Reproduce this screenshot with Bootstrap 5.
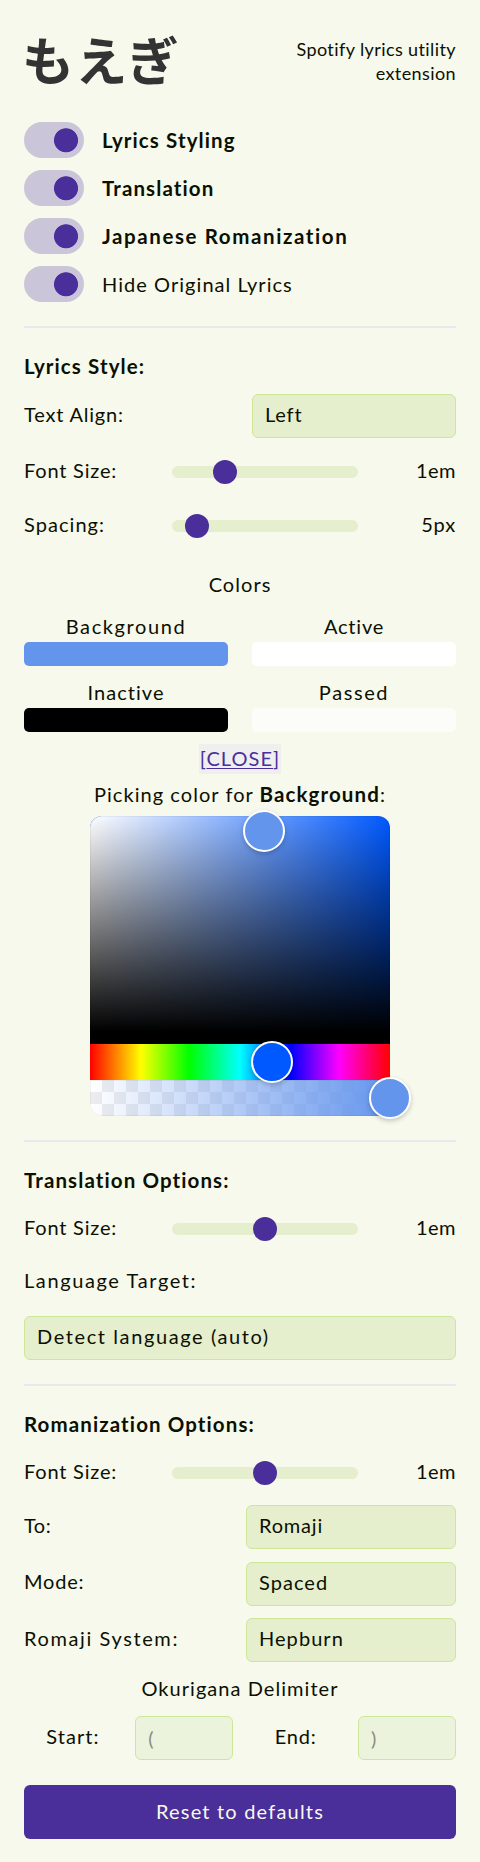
<!DOCTYPE html>
<html lang="en">
<head>
<meta charset="utf-8">
<meta name="viewport" content="width=device-width, initial-scale=1">
<title>もえぎ</title>
<link href="https://cdn.jsdelivr.net/npm/bootstrap@5.3.0/dist/css/bootstrap.min.css" rel="stylesheet">
<style>
  :root { --ink: #0b1002; --accent: #4a2e9a; --field: #e5eecd; --field-line: #cfe699; }
  body { background: #f7f9ec; color: var(--ink); font: 20px/28px Lato, "Noto Sans CJK JP", sans-serif; letter-spacing: .8px; }
  .popup { width: 480px; height: 1862px; padding: 24px 24px 0; }
  b, .fw-bold { font-size: 20.5px; letter-spacing: 1.1px; }
  .top { height: 76px; margin-bottom: 22px; }
  .brand { font: 700 52px/76px "Noto Sans CJK JP", sans-serif; color: #333; letter-spacing: 1.2px; margin: -6px 0 0 -2px; }
  .tagline { font-size: 18px; line-height: 24.5px; width: 180px; letter-spacing: .4px; margin-top: -2px; }
  .toggles { gap: 12px; }
  .toggle { gap: 18px; height: 36px; min-height: 0; padding: 0; margin: 0; }
  .form-switch .form-check-input { width: 60px; height: 36px; margin: 0; border: 0; border-radius: 18px; float: none; flex: none;
    background: radial-gradient(circle at 42px 18.3px, var(--accent) 11.6px, #cbc5da 12.4px) !important; }
  hr { margin: 24px 0; border: 0; height: 2px; background: #e9e9ed; opacity: 1; }
  .section-name { height: 28px; line-height: 28px; }
  .line-r { display: flex; align-items: center; justify-content: space-between; }
  .line-r > span, .delims > span { padding-bottom: 5px; }
  .form-select, .form-control { height: 44px; padding: 0 12px; font: inherit; letter-spacing: inherit; line-height: 42px; color: var(--ink);
    background: var(--field); border: 1px solid var(--field-line); border-radius: 6px; }
  .form-select { padding-bottom: 4px; line-height: 39px; }
  .w-align { width: 204px; } .w-roman { width: 210px; } .w-delim { width: 98px; }
  .form-control { background: #ecf3dd; }
  .form-control::placeholder { color: #898d80; }
  .slider-row { display: grid; grid-template-columns: 148px 186px 1fr; grid-template-rows: 28px; align-items: center; height: 28px; }
  .form-range { height: 24px; display: block; margin-top: 4px; }
  .form-range::-webkit-slider-runnable-track { height: 12px; background: var(--field); border-radius: 6px; }
  .form-range::-webkit-slider-thumb { width: 24px; height: 24px; margin-top: -6px; background: var(--accent); box-shadow: none; }
  .swatches { display: grid; grid-template-columns: 204px 204px; gap: 14px 24px; text-align: center; }
  .swatch { height: 24px; border-radius: 5px; }
  .swatch-name { line-height: 25px; height: 28px; }
  .close-link { display: block; width: 82px; height: 30px; line-height: 28px; background: #efefef; color: var(--accent); text-decoration: none; }
  .close-link span { text-decoration: underline; text-underline-offset: 2px; text-decoration-thickness: 1px; }
  .picker { width: 300px; height: 300px; }
  .picker > div { position: relative; }
  .shade { height: 228px; border-radius: 12px 12px 0 0; border-bottom: 12px solid #000;
    background: linear-gradient(to top, #000, transparent), linear-gradient(to right, #fff, rgba(255,255,255,0)) #0059ff; box-shadow: inset 0 0 0 1px rgba(0,0,0,.05); }
  .hue { height: 36px; background: linear-gradient(to right, red 0, #ff0 17%, #0f0 33%, #0ff 50%, #00f 67%, #f0f 83%, red 100%); }
  .alpha { height: 36px; border-radius: 0 0 12px 12px; box-shadow: inset 0 0 0 1px rgba(0,0,0,.05);
    background: linear-gradient(to right, rgba(100,149,237,0), #6495ed), conic-gradient(#ededee 25%, #fff 0 50%, #ededee 0 75%, #fff 0) 0 0 / 24px 24px; }
  .knob { position: absolute; width: 42px; height: 42px; margin: -21px 0 0 -21px; border: 2px solid #fff; border-radius: 50%; background: #6495ed; box-shadow: 0 2px 5px rgba(0,0,0,.2); z-index: 2; }
  .reset { height: 54px; background: var(--accent) !important; color: #f7f9ec !important; border: 0; border-radius: 6px; font: inherit; letter-spacing: 1.2px; padding: 0 0 3px; line-height: 50px; }
  .ls-0 { letter-spacing: .5px; } .ls-1 { letter-spacing: 1.05px; } .ls-2 { letter-spacing: 1.6px; }
</style>
</head>
<body>
<main class="popup">
  <header class="top d-flex align-items-center justify-content-between">
    <h1 class="brand" lang="ja">もえぎ</h1>
    <div class="tagline text-end">Spotify lyrics utility extension</div>
  </header>

  <div class="toggles d-flex flex-column">
    <label class="toggle form-check form-switch d-flex align-items-center"><input class="form-check-input" type="checkbox" role="switch" checked><span class="fw-bold">Lyrics Styling</span></label>
    <label class="toggle form-check form-switch d-flex align-items-center"><input class="form-check-input" type="checkbox" role="switch" checked><span class="fw-bold">Translation</span></label>
    <label class="toggle form-check form-switch d-flex align-items-center"><input class="form-check-input" type="checkbox" role="switch" checked><span class="fw-bold ls-2">Japanese Romanization</span></label>
    <label class="toggle form-check form-switch d-flex align-items-center"><input class="form-check-input" type="checkbox" role="switch" checked><span class="ls-1">Hide Original Lyrics</span></label>
  </div>

  <hr>

  <section>
    <div class="section-name fw-bold" style="margin-bottom:14px">Lyrics Style:</div>
    <div class="line-r"><span>Text Align:</span><select class="form-select w-align"><option>Left</option></select></div>
    <div class="slider-row" style="margin-top:18px"><span>Font Size:</span><input type="range" class="form-range" min="0" max="100" value="25"><span class="text-end ls-0">1em</span></div>
    <div class="slider-row" style="margin-top:26px"><span class="ls-1">Spacing:</span><input type="range" class="form-range" min="0" max="100" value="8"><span class="text-end">5px</span></div>
    <div class="text-center ls-1" style="margin:32px 0 16px">Colors</div>
    <div class="swatches">
      <div><div class="swatch-name ls-2">Background</div><div class="swatch" style="background:#6495ed"></div></div>
      <div><div class="swatch-name">Active</div><div class="swatch" style="background:#fff"></div></div>
      <div><div class="swatch-name ls-1">Inactive</div><div class="swatch" style="background:#000"></div></div>
      <div><div class="swatch-name ls-2">Passed</div><div class="swatch" style="background:#fcfdf8"></div></div>
    </div>
    <a href="#" class="close-link ls-1 text-center mx-auto" style="margin-top:12px">[<span>CLOSE</span>]</a>
    <div class="text-center ls-1" style="margin:6px 0 8px">Picking color for <b>Background</b>:</div>
    <div class="picker mx-auto">
      <div class="shade"><span class="knob" style="left:58%;top:15px"></span></div>
      <div class="hue"><span class="knob" style="left:60.8%;top:18px;background:#0059ff"></span></div>
      <div class="alpha"><span class="knob" style="left:100%;top:18px"></span></div>
    </div>
  </section>

  <hr>

  <section>
    <div class="section-name fw-bold">Translation Options:</div>
    <div class="slider-row" style="margin-top:19px"><span>Font Size:</span><input type="range" class="form-range" min="0" max="100" value="50"><span class="text-end ls-0">1em</span></div>
    <div class="ls-2" style="margin:25px 0 22px">Language Target:</div>
    <select class="form-select ls-2"><option>Detect language (auto)</option></select>
  </section>

  <hr>

  <section>
    <div class="section-name fw-bold">Romanization Options:</div>
    <div class="slider-row" style="margin-top:19px"><span>Font Size:</span><input type="range" class="form-range" min="0" max="100" value="50"><span class="text-end ls-0">1em</span></div>
    <div class="d-flex flex-column" style="gap:12.5px;margin-top:20px">
      <div class="line-r"><span class="ls-0">To:</span><select class="form-select w-roman"><option>Romaji</option></select></div>
      <div class="line-r"><span>Mode:</span><select class="form-select w-roman ls-1"><option>Spaced</option></select></div>
      <div class="line-r"><span class="ls-2">Romaji System:</span><select class="form-select w-roman ls-1"><option>Hepburn</option></select></div>
    </div>
    <div class="text-center ls-1" style="margin:12px 0 14px">Okurigana Delimiter</div>
    <div class="delims d-grid align-items-center text-center" style="grid-template-columns:98px 98px 98px 98px;justify-content:space-between">
      <span class="ls-1">Start:</span><input class="form-control w-delim" placeholder="(">
      <span>End:</span><input class="form-control w-delim" placeholder=")">
    </div>
  </section>

  <button class="btn reset w-100" style="margin-top:25px">Reset to defaults</button>
</main>
<script src="https://cdn.jsdelivr.net/npm/bootstrap@5.3.0/dist/js/bootstrap.bundle.min.js"></script>
</body>
</html>
